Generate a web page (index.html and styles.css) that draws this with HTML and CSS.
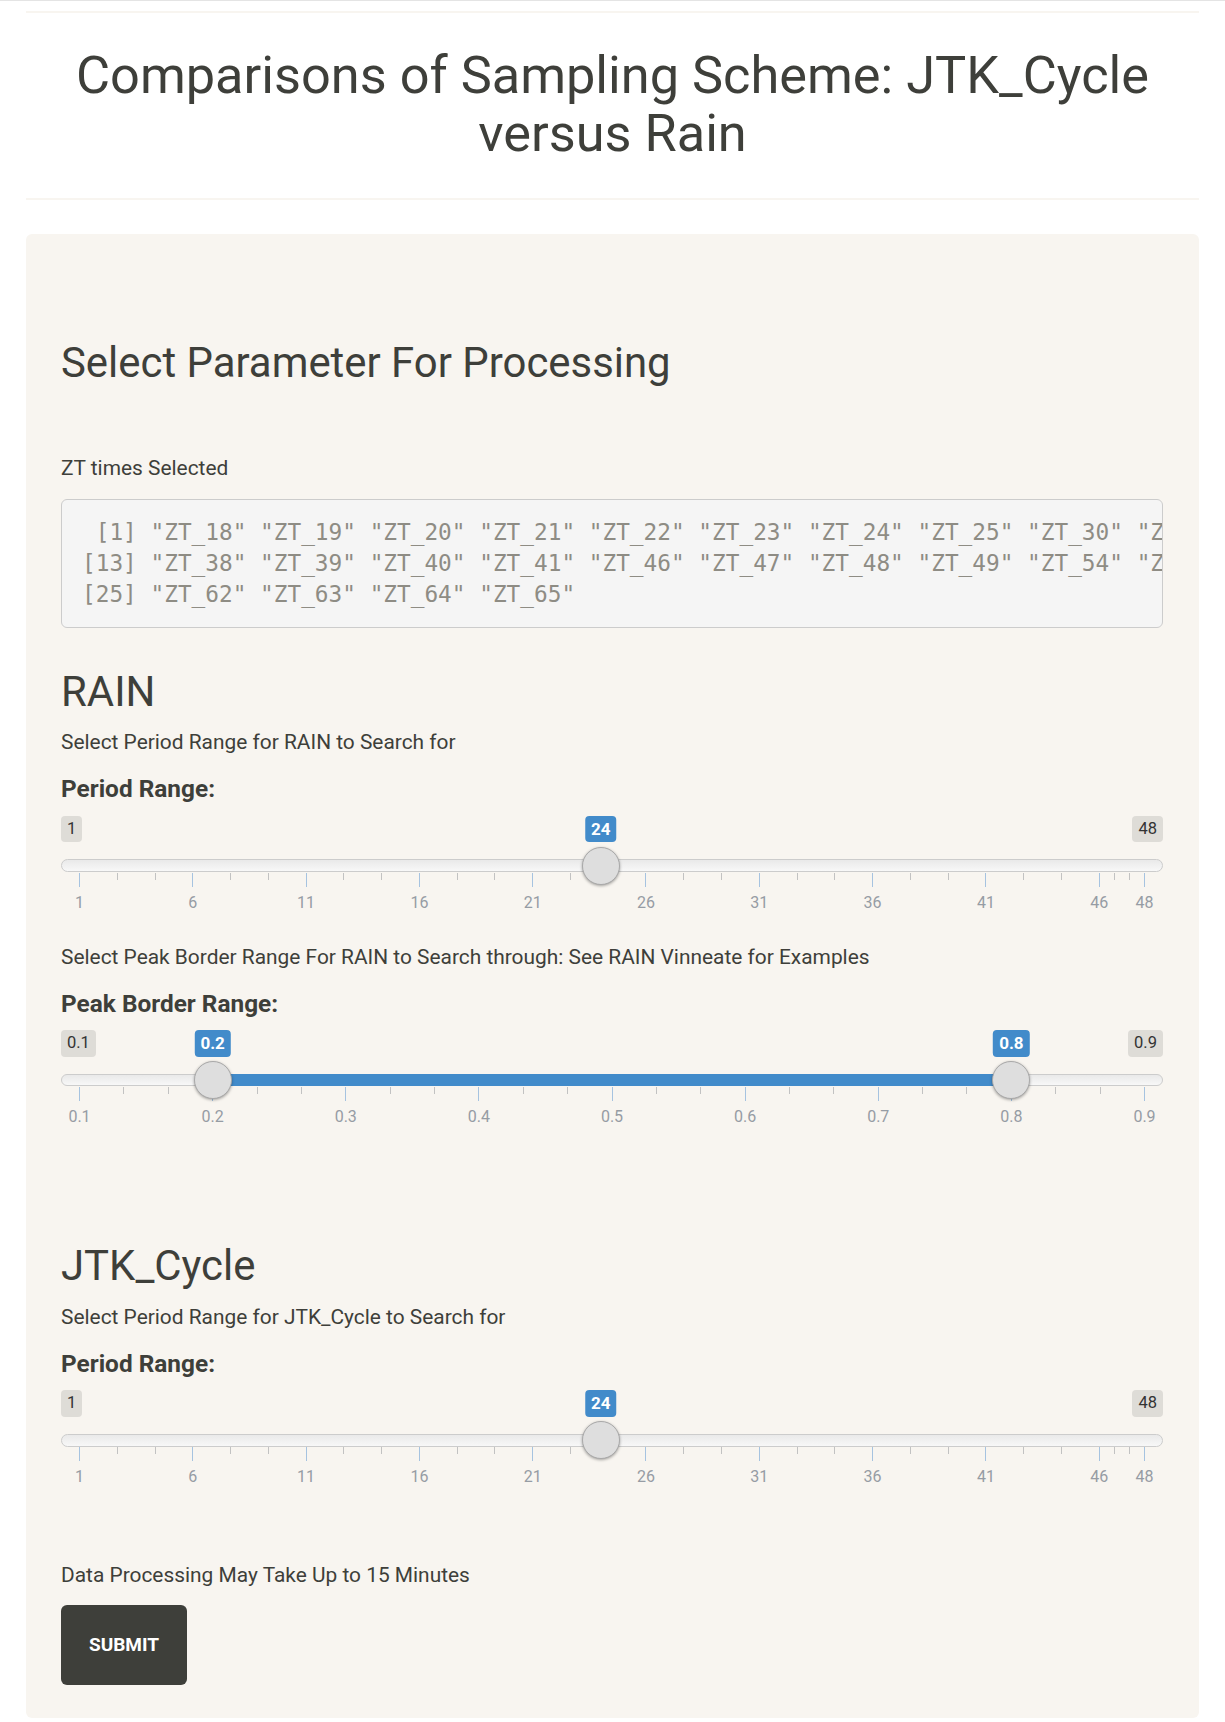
FILE: index.html
```html
<!DOCTYPE html>
<html lang="en">
<head>
<meta charset="utf-8">
<title>Comparisons of Sampling Scheme</title>
<link rel="stylesheet" href="styles.css">
</head>
<body>
<div class="topline"></div>
<div class="page">
  <div class="rule rule-top"></div>
  <h1 class="title">Comparisons of Sampling Scheme: JTK_Cycle versus Rain</h1>
  <div class="rule rule-bottom"></div>

  <div class="well">
    <h2 class="heading">Select Parameter For Processing</h2>
    <p class="text zt-label">ZT times Selected</p>
<pre class="output"> [1] "ZT_18" "ZT_19" "ZT_20" "ZT_21" "ZT_22" "ZT_23" "ZT_24" "ZT_25" "ZT_30" "ZT_31" "ZT_32" "ZT_33"
[13] "ZT_38" "ZT_39" "ZT_40" "ZT_41" "ZT_46" "ZT_47" "ZT_48" "ZT_49" "ZT_54" "ZT_55" "ZT_56" "ZT_57"
[25] "ZT_62" "ZT_63" "ZT_64" "ZT_65"</pre>

    <h2 class="heading sec-head">RAIN</h2>
    <p class="text sub">Select Period Range for RAIN to Search for</p>
    <label class="ctl-label">Period Range:</label>
    <div class="slider">
      <span class="irs-min">1</span>
      <span class="irs-max">48</span>
      <div class="irs-line"></div>
      <div class="axis">
        <span class="tick major" style="left:0%"></span>
        <span class="tick" style="left:3.546%"></span>
        <span class="tick" style="left:7.092%"></span>
        <span class="tick major" style="left:10.638%"></span>
        <span class="tick" style="left:14.184%"></span>
        <span class="tick" style="left:17.730%"></span>
        <span class="tick major" style="left:21.277%"></span>
        <span class="tick" style="left:24.823%"></span>
        <span class="tick" style="left:28.369%"></span>
        <span class="tick major" style="left:31.915%"></span>
        <span class="tick" style="left:35.461%"></span>
        <span class="tick" style="left:39.007%"></span>
        <span class="tick major" style="left:42.553%"></span>
        <span class="tick" style="left:46.099%"></span>
        <span class="tick" style="left:49.645%"></span>
        <span class="tick major" style="left:53.191%"></span>
        <span class="tick" style="left:56.738%"></span>
        <span class="tick" style="left:60.284%"></span>
        <span class="tick major" style="left:63.830%"></span>
        <span class="tick" style="left:67.376%"></span>
        <span class="tick" style="left:70.922%"></span>
        <span class="tick major" style="left:74.468%"></span>
        <span class="tick" style="left:78.014%"></span>
        <span class="tick" style="left:81.560%"></span>
        <span class="tick major" style="left:85.106%"></span>
        <span class="tick" style="left:88.652%"></span>
        <span class="tick" style="left:92.199%"></span>
        <span class="tick major" style="left:95.745%"></span>
        <span class="tick" style="left:97.163%"></span>
        <span class="tick" style="left:98.582%"></span>
        <span class="tick major" style="left:100%"></span>
        <span class="grid-text" style="left:0%">1</span>
        <span class="grid-text" style="left:10.638%">6</span>
        <span class="grid-text" style="left:21.277%">11</span>
        <span class="grid-text" style="left:31.915%">16</span>
        <span class="grid-text" style="left:42.553%">21</span>
        <span class="grid-text" style="left:53.191%">26</span>
        <span class="grid-text" style="left:63.830%">31</span>
        <span class="grid-text" style="left:74.468%">36</span>
        <span class="grid-text" style="left:85.106%">41</span>
        <span class="grid-text" style="left:95.745%">46</span>
        <span class="grid-text" style="left:100%">48</span>
        <span class="irs-single" style="left:48.936%">24</span>
        <span class="handle" style="left:48.936%"></span>
      </div>
    </div>

    <p class="text sub2">Select Peak Border Range For RAIN to Search through: See RAIN Vinneate for Examples</p>
    <label class="ctl-label">Peak Border Range:</label>
    <div class="slider">
      <span class="irs-min">0.1</span>
      <span class="irs-max">0.9</span>
      <div class="irs-line"></div>
      <div class="axis">
        <span class="irs-bar" style="left:12.5%;width:75%"></span>
        <span class="tick major" style="left:0%"></span>
        <span class="tick" style="left:4.167%"></span>
        <span class="tick" style="left:8.333%"></span>
        <span class="tick major" style="left:12.5%"></span>
        <span class="tick" style="left:16.667%"></span>
        <span class="tick" style="left:20.833%"></span>
        <span class="tick major" style="left:25%"></span>
        <span class="tick" style="left:29.167%"></span>
        <span class="tick" style="left:33.333%"></span>
        <span class="tick major" style="left:37.5%"></span>
        <span class="tick" style="left:41.667%"></span>
        <span class="tick" style="left:45.833%"></span>
        <span class="tick major" style="left:50%"></span>
        <span class="tick" style="left:54.167%"></span>
        <span class="tick" style="left:58.333%"></span>
        <span class="tick major" style="left:62.5%"></span>
        <span class="tick" style="left:66.667%"></span>
        <span class="tick" style="left:70.833%"></span>
        <span class="tick major" style="left:75%"></span>
        <span class="tick" style="left:79.167%"></span>
        <span class="tick" style="left:83.333%"></span>
        <span class="tick major" style="left:87.5%"></span>
        <span class="tick" style="left:91.667%"></span>
        <span class="tick" style="left:95.833%"></span>
        <span class="tick major" style="left:100%"></span>
        <span class="grid-text" style="left:0%">0.1</span>
        <span class="grid-text" style="left:12.5%">0.2</span>
        <span class="grid-text" style="left:25%">0.3</span>
        <span class="grid-text" style="left:37.5%">0.4</span>
        <span class="grid-text" style="left:50%">0.5</span>
        <span class="grid-text" style="left:62.5%">0.6</span>
        <span class="grid-text" style="left:75%">0.7</span>
        <span class="grid-text" style="left:87.5%">0.8</span>
        <span class="grid-text" style="left:100%">0.9</span>
        <span class="irs-single" style="left:12.5%">0.2</span>
        <span class="irs-single" style="left:87.5%">0.8</span>
        <span class="handle" style="left:12.5%"></span>
        <span class="handle" style="left:87.5%"></span>
      </div>
    </div>

    <h2 class="heading jtk-head">JTK_Cycle</h2>
    <p class="text sub">Select Period Range for JTK_Cycle to Search for</p>
    <label class="ctl-label">Period Range:</label>
    <div class="slider">
      <span class="irs-min">1</span>
      <span class="irs-max">48</span>
      <div class="irs-line"></div>
      <div class="axis">
        <span class="tick major" style="left:0%"></span>
        <span class="tick" style="left:3.546%"></span>
        <span class="tick" style="left:7.092%"></span>
        <span class="tick major" style="left:10.638%"></span>
        <span class="tick" style="left:14.184%"></span>
        <span class="tick" style="left:17.730%"></span>
        <span class="tick major" style="left:21.277%"></span>
        <span class="tick" style="left:24.823%"></span>
        <span class="tick" style="left:28.369%"></span>
        <span class="tick major" style="left:31.915%"></span>
        <span class="tick" style="left:35.461%"></span>
        <span class="tick" style="left:39.007%"></span>
        <span class="tick major" style="left:42.553%"></span>
        <span class="tick" style="left:46.099%"></span>
        <span class="tick" style="left:49.645%"></span>
        <span class="tick major" style="left:53.191%"></span>
        <span class="tick" style="left:56.738%"></span>
        <span class="tick" style="left:60.284%"></span>
        <span class="tick major" style="left:63.830%"></span>
        <span class="tick" style="left:67.376%"></span>
        <span class="tick" style="left:70.922%"></span>
        <span class="tick major" style="left:74.468%"></span>
        <span class="tick" style="left:78.014%"></span>
        <span class="tick" style="left:81.560%"></span>
        <span class="tick major" style="left:85.106%"></span>
        <span class="tick" style="left:88.652%"></span>
        <span class="tick" style="left:92.199%"></span>
        <span class="tick major" style="left:95.745%"></span>
        <span class="tick" style="left:97.163%"></span>
        <span class="tick" style="left:98.582%"></span>
        <span class="tick major" style="left:100%"></span>
        <span class="grid-text" style="left:0%">1</span>
        <span class="grid-text" style="left:10.638%">6</span>
        <span class="grid-text" style="left:21.277%">11</span>
        <span class="grid-text" style="left:31.915%">16</span>
        <span class="grid-text" style="left:42.553%">21</span>
        <span class="grid-text" style="left:53.191%">26</span>
        <span class="grid-text" style="left:63.830%">31</span>
        <span class="grid-text" style="left:74.468%">36</span>
        <span class="grid-text" style="left:85.106%">41</span>
        <span class="grid-text" style="left:95.745%">46</span>
        <span class="grid-text" style="left:100%">48</span>
        <span class="irs-single" style="left:48.936%">24</span>
        <span class="handle" style="left:48.936%"></span>
      </div>
    </div>

    <p class="text note">Data Processing May Take Up to 15 Minutes</p>
    <button class="btn" type="button">Submit</button>
  </div>
</div>
</body>
</html>
```

FILE: styles.css
```css
* { box-sizing: border-box; }

html, body {
  margin: 0;
  background: #ffffff;
}

body {
  font-family: Roboto, "Helvetica Neue", Arial, sans-serif;
  color: #3e3f3a;
}

.topline {
  height: 1px;
  background: #e4e4e4;
}

.page {
  padding: 0 26px;
}

.rule {
  height: 2px;
  background: #f8f5f0;
}

.rule-top { margin-top: 10px; }

.title {
  margin: 34.4px 0 0;
  font-size: 52.3px;
  line-height: 57.7px;
  font-weight: 400;
  text-align: center;
}

.rule-bottom { margin-top: 34.9px; }

.well {
  margin-top: 34.3px;
  background: #f8f5f0;
  border-radius: 6px;
  padding: 105px 36px 33px 35px;
}

.heading {
  margin: 0;
  font-size: 41.9px;
  line-height: 48px;
  font-weight: 400;
}

.text {
  margin: 0;
  font-size: 20.9px;
  line-height: 28px;
}

.zt-label { margin-top: 67.2px; }

.output {
  margin: 16.8px 0 0;
  height: 129px;
  padding: 16.6px 20px 0 20px;
  background: #f5f5f5;
  border: 1px solid #cccccc;
  border-radius: 6px;
  color: #8e8c84;
  font-family: "DejaVu Sans Mono", "Liberation Mono", monospace;
  font-size: 22.75px;
  line-height: 31px;
  white-space: pre;
  overflow: hidden;
}

.sec-head { margin-top: 39.6px; }
.jtk-head { margin-top: 112.1px; }

.sub { margin-top: 12.4px; }
.sub2 { margin-top: 27px; }

.ctl-label {
  display: block;
  margin-top: 19.4px;
  font-size: 24.4px;
  line-height: 28px;
  font-weight: 700;
}

.note { margin-top: 71px; }

/* range slider */
.slider {
  position: relative;
  height: 100px;
  margin-top: 12.2px;
}

.irs-min,
.irs-max,
.irs-single {
  position: absolute;
  top: 0;
  height: 26.5px;
  padding: 0 6px;
  border-radius: 4px;
  font-size: 16.5px;
  line-height: 26.5px;
  white-space: nowrap;
}

.irs-min,
.irs-max {
  background: rgba(0, 0, 0, 0.1);
  color: #333333;
}

.irs-min { left: 0; }
.irs-max { right: 0; }

.irs-single {
  background: #428bca;
  color: #ffffff;
  font-size: 17px;
  font-weight: 700;
  transform: translateX(-50%);
}

.irs-line {
  position: absolute;
  left: 0;
  right: 0;
  top: 43.7px;
  height: 12.7px;
  border: 1px solid #cccccc;
  border-radius: 8px;
  background: linear-gradient(to bottom, #e2e2e2 -50%, #ffffff 150%);
}

.axis {
  position: absolute;
  top: 0;
  bottom: 0;
  left: 18.5px;
  right: 18.5px;
}

.irs-bar {
  position: absolute;
  top: 43.7px;
  height: 12.7px;
  background: #428bca;
}

.tick {
  position: absolute;
  top: 57px;
  width: 1px;
  height: 7px;
  margin-left: -0.5px;
  background: #c2c2c2;
}

.tick.major {
  height: 14px;
  background: #a6c3e0;
}

.grid-text {
  position: absolute;
  top: 77px;
  font-size: 16px;
  line-height: 20px;
  color: #969ca4;
  transform: translateX(-50%);
  white-space: nowrap;
}

.handle {
  position: absolute;
  top: 31px;
  width: 38px;
  height: 38px;
  margin-left: -19px;
  border-radius: 50%;
  background: #dedede;
  border: 1.5px solid #a9a9a9;
  box-shadow: 0 1px 3px rgba(0, 0, 0, 0.35);
}

.btn {
  display: block;
  margin-top: 15.8px;
  width: 126px;
  height: 80px;
  padding: 0;
  border: 0;
  border-radius: 6px;
  background: #3e3f3a;
  color: #ffffff;
  font-family: Roboto, "Helvetica Neue", Arial, sans-serif;
  font-size: 19px;
  font-weight: 700;
  text-transform: uppercase;
}
```
